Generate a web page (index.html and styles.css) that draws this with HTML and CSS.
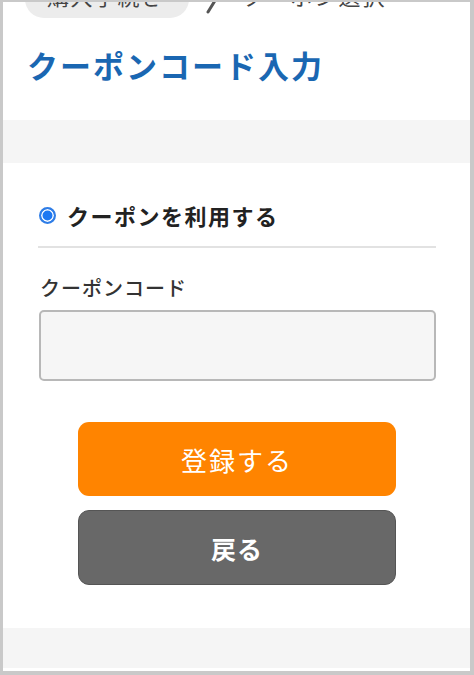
FILE: index.html
```html
<!DOCTYPE html>
<html lang="ja">
<head>
<meta charset="utf-8">
<title>クーポンコード入力</title>
<link rel="stylesheet" href="styles.css">
</head>
<body>
<div class="frame">
  <header class="head">
    <nav class="crumbs">
      <span class="crumb-pill">購入手続き</span>
      <svg class="chev" width="14" height="38" viewBox="0 0 14 38"><polyline points="3,6 11,19 3,32" fill="none" stroke="#555" stroke-width="3" stroke-linecap="round" stroke-linejoin="round"/></svg>
      <span class="crumb-cur">クーポン選択</span>
    </nav>
    <h1 class="title">クーポンコード入力</h1>
  </header>
  <div class="band"></div>
  <main class="form">
    <label class="radio-row">
      <span class="radio"></span>
      <span class="radio-text">クーポンを利用する</span>
    </label>
    <hr class="divider">
    <div class="field-label">クーポンコード</div>
    <div class="input"></div>
    <div class="actions">
      <button class="btn btn-primary" type="button">登録する</button>
      <button class="btn btn-back" type="button">戻る</button>
    </div>
  </main>
  <div class="band band-bottom"></div>
</div>
</body>
</html>
```

FILE: styles.css
```css
html, body {
  margin: 0;
  padding: 0;
  background: #ffffff;
}
body {
  font-family: "Noto Sans CJK JP", "Noto Sans", sans-serif;
  color: #222;
}
.frame {
  width: 474px;
  height: 675px;
  box-sizing: border-box;
  border: 3px solid #c9c9c9;
  border-top-width: 2px;
  border-right-width: 4px;
  border-bottom-width: 4px;
  background: #fff;
  overflow: hidden;
  display: flex;
  flex-direction: column;
}
.head {
  height: 118px;
  flex: none;
}
.crumbs {
  display: flex;
  align-items: center;
  margin-top: -22px;
  height: 38px;
  padding-left: 22px;
  gap: 14px;
}
.crumb-pill {
  background: #ececec;
  border-radius: 19px;
  height: 38px;
  line-height: 30px;
  padding: 0 24px 0 22px;
  font-size: 22px;
  color: #444;
  letter-spacing: 1.5px;
}
.chev {
  flex: none;
  margin-left: 2px;
}
.crumb-cur {
  font-size: 22px;
  line-height: 30px;
  align-self: flex-start;
  color: #444;
  letter-spacing: 2px;
  margin-left: 10px;
}
.title {
  margin: 27px 0 0 24px;
  font-size: 31px;
  line-height: 40px;
  font-weight: 700;
  color: #1a67b2;
  letter-spacing: 2px;
}
.band {
  height: 43px;
  background: #f5f5f5;
  flex: none;
}
.form {
  padding: 36px 34px 0 35px;
  flex: none;
  height: 465px;
  box-sizing: border-box;
}
.radio-row {
  display: flex;
  align-items: center;
  height: 32px;
}
.radio {
  width: 13px;
  height: 13px;
  border: 2px solid #2f7de6;
  border-radius: 50%;
  background: #1d78f2;
  box-shadow: inset 0 0 0 1.5px #fff;
  margin-left: 1px;
  flex: none;
}
.radio-text {
  margin-left: 11px;
  font-size: 22px;
  font-weight: 700;
  color: #222;
  letter-spacing: 1.5px;
}
.divider {
  border: 0;
  border-top: 2px solid #e2e2e2;
  margin: 15px 0 0 0;
  height: 0;
}
.field-label {
  margin-top: 26px;
  margin-left: 2px;
  font-size: 20px;
  line-height: 28px;
  font-weight: 500;
  color: #333;
  letter-spacing: 1px;
}
.input {
  margin-top: 8px;
  height: 71px;
  box-sizing: border-box;
  border: 2px solid #b8b8b8;
  border-radius: 5px;
  background: #f6f6f6;
  margin-left: 1px;
}
.actions {
  display: flex;
  flex-direction: column;
  align-items: center;
  gap: 14px;
  margin-top: 41px;
}
.btn {
  width: 318px;
  height: 74px;
  border-radius: 11px;
  font-family: "Noto Sans CJK JP", "Noto Sans", sans-serif;
  color: #fff;
  cursor: pointer;
  padding: 0;
}
.btn-primary {
  background: #ff8400;
  border: 0;
  font-size: 26px;
  font-weight: 400;
  letter-spacing: 2px;
}
.btn-back {
  background: #686868;
  border: 1px solid #555;
  height: 75px;
  font-size: 25px;
  font-weight: 700;
  letter-spacing: 1px;
}
.band-bottom {
  height: 40px;
}
```
